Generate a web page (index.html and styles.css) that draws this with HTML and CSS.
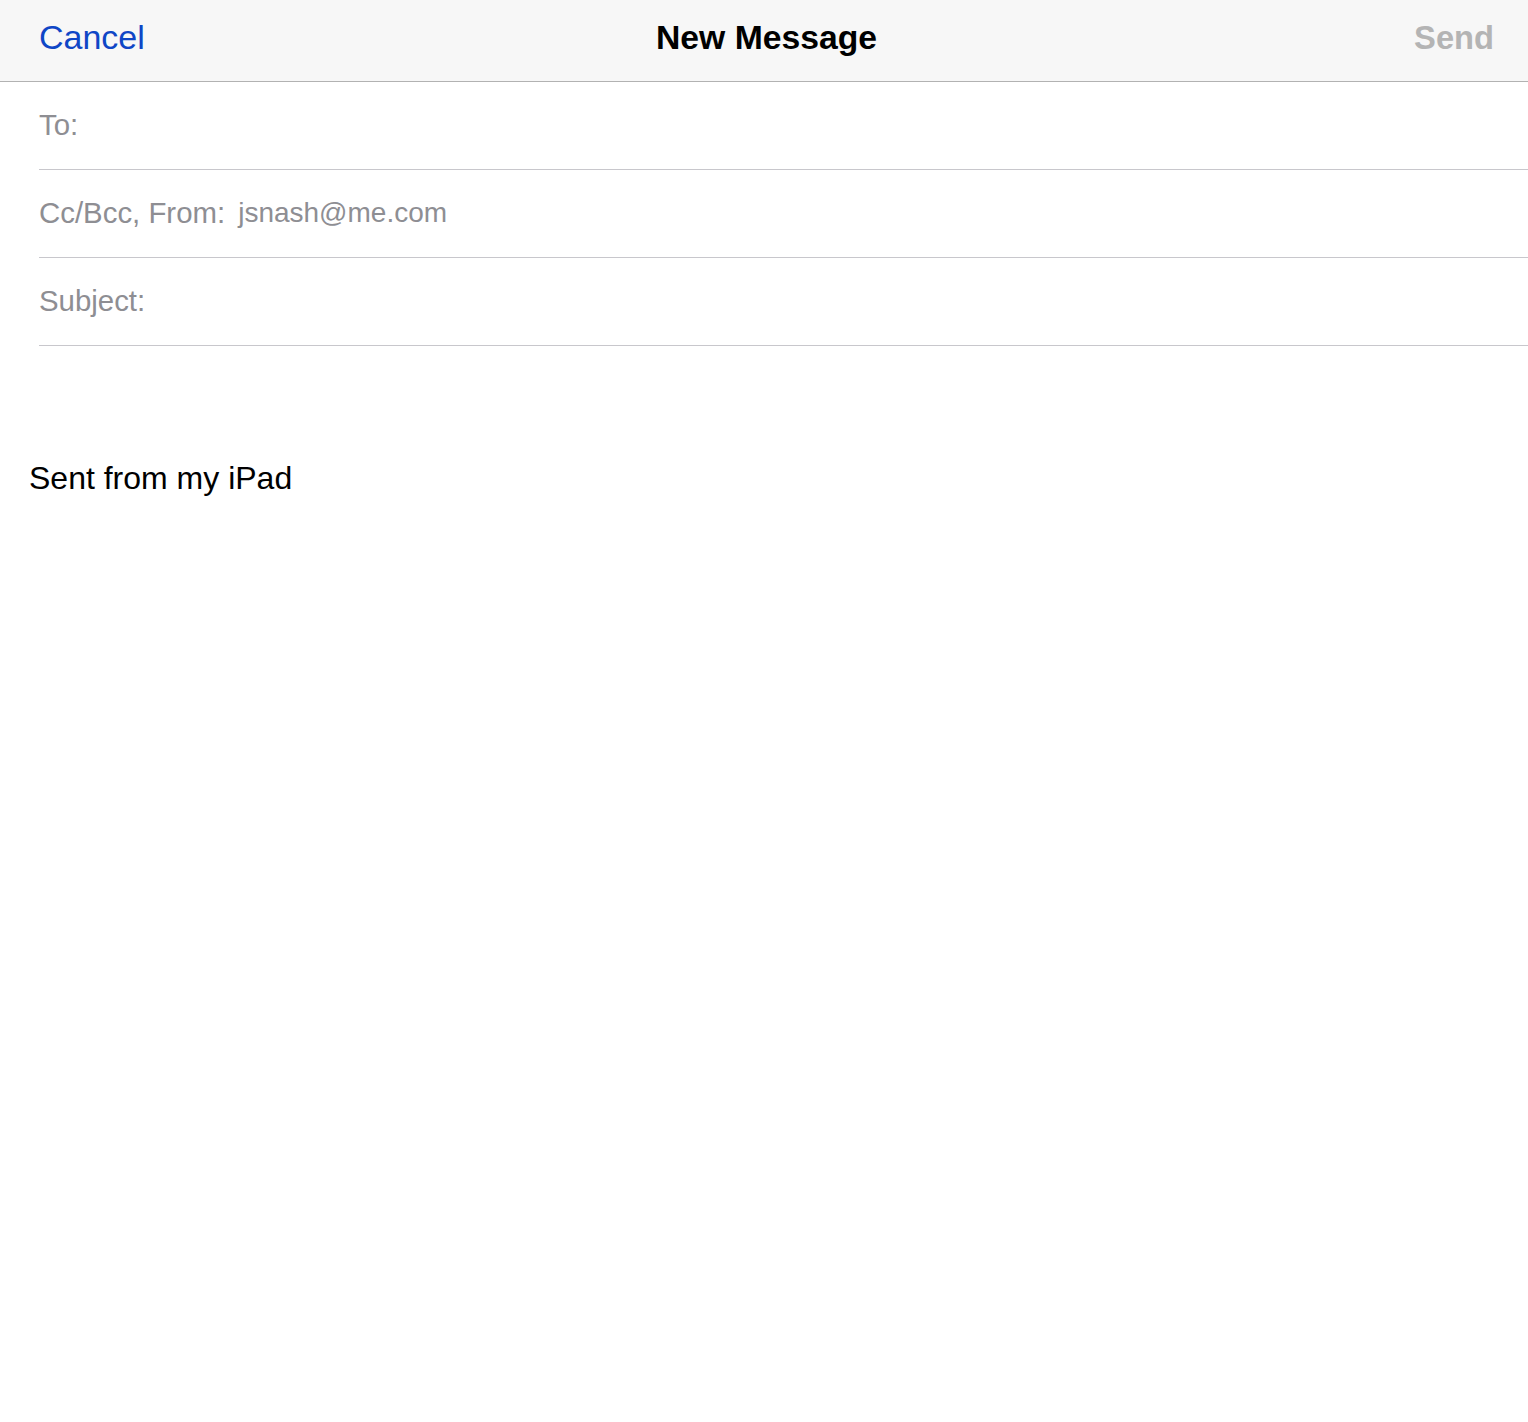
FILE: index.html
```html
<!DOCTYPE html>
<html>
<head>
<meta charset="utf-8">
<title>New Message</title>
<link rel="stylesheet" href="styles.css">
</head>
<body>
<header class="navbar">
  <span class="nav-btn cancel">Cancel</span>
  <span class="nav-title">New Message</span>
  <span class="nav-btn send">Send</span>
</header>
<main class="compose">
  <div class="field"><span class="label">To:</span></div>
  <div class="field"><span class="label">Cc/Bcc, From:</span><span class="value">jsnash@me.com</span></div>
  <div class="field"><span class="label">Subject:</span></div>
  <div class="body-text">Sent from my iPad</div>
</main>
</body>
</html>
```
FILE: styles.css
```css
html, body {
  margin: 0;
  padding: 0;
  background: #ffffff;
  font-family: "Liberation Sans", Arial, sans-serif;
}
.navbar {
  box-sizing: border-box;
  display: grid;
  grid-template-columns: 1fr auto 1fr;
  align-items: center;
  height: 82px;
  padding-bottom: 6px;
  background: #f7f7f7;
  border-bottom: 1px solid #b2b2b2;
}
.nav-btn {
  font-size: 34px;
}
.cancel {
  justify-self: start;
  padding-left: 39px;
  color: #0f46c6;
}
.nav-title {
  font-size: 33.7px;
  font-weight: bold;
  color: #000;
  padding-left: 5px;
}
.send {
  justify-self: end;
  padding-right: 34px;
  color: #b4b4b4;
  font-weight: bold;
  font-size: 32.7px;
}
.compose {
  display: flex;
  flex-direction: column;
}
.field {
  box-sizing: border-box;
  display: flex;
  align-items: center;
  gap: 13px;
  height: 88px;
  padding-bottom: 2px;
  margin-left: 39px;
  border-bottom: 1px solid #c8c7cc;
  color: #8e8e93;
  font-size: 29.4px;
}
.value {
  font-size: 28px;
}
.body-text {
  padding-top: 114px;
  padding-left: 29px;
  font-size: 32px;
  line-height: 37px;
  color: #000;
}
```
